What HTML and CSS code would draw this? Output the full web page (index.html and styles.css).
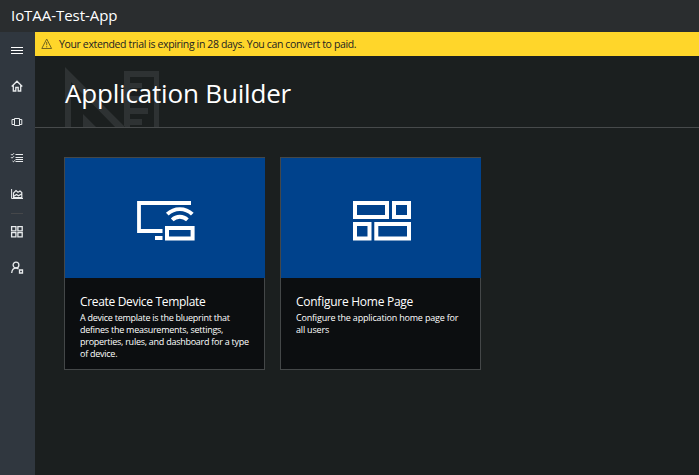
FILE: index.html
```html
<!DOCTYPE html>
<html lang="en">
<head>
<meta charset="utf-8">
<title>Application Builder</title>
<link rel="stylesheet" href="styles.css">
</head>
<body>
<header class="topbar"><span class="app-name">IoTAA-Test-App</span></header>
<div class="shell">
  <nav class="sidebar">
    <svg class="nav-icon" viewBox="0 0 14 14"><path d="M0 3.5h12M0 6.5h12M0 9.5h12" stroke="#fff"/></svg>
    <svg class="nav-icon" viewBox="0 0 14 14"><path d="M.7 6.5 6 1.2 11.3 6.5M2.3 5.5V11h2.5V7.5h2.4V11h2.5V5.5" stroke-width="1.3"/></svg>
    <svg class="nav-icon" viewBox="0 0 14 14"><path d="M3.5 2.5h5v7h-5zM3.5 3.5H1v5h2.5M8.5 3.5h2.3v5H8.5"/></svg>
    <svg class="nav-icon" viewBox="0 0 14 14"><path d="M4.5 2.5H12M4.5 5.5H12M4.5 7.5H12M4.5 9.5H12M0 2.2l1 1 2-2M0 5.2l1 1 2-2M1.5 9l1 .8 1.5-1.6"/></svg>
    <svg class="nav-icon" viewBox="0 0 14 14"><path d="M.6 1v9.5H12"/><path d="M2.5 9.5V5L5 2.5l2 1.8L9 3l1.8 1.5v5zM2.5 8.5l3-2 2 1.3L10.5 6" stroke-width="1.2"/></svg>
    <div class="divider"></div>
    <svg class="nav-icon grid-icon" viewBox="0 0 14 14"><path d="M.6 1.6h4.3v4.3H.6zM6.9 1.6h4.3v4.3H6.9zM.6 7.6h4.3v4.3H.6zM6.9 7.6h4.3v4.3H6.9z" stroke-width="1.3"/></svg>
    <svg class="nav-icon" viewBox="0 0 14 14"><circle cx="5" cy="4" r="2.9" stroke-width="1.3"/><path d="M.7 12C1 9 2.5 7.2 5 7.2c1 0 1.8.3 2.5.9M8.5 9h3v3h-3z" stroke-width="1.3"/></svg>
  </nav>
  <main class="main">
    <div class="banner">
      <svg class="warning" viewBox="0 0 12 12"><path d="M5.7 1 .8 10.5h9.8zM5.7 4v3.2M5.7 8.2v1.2"/></svg>
      <span class="banner-text">Your extended trial is expiring in 28 days. You can convert to paid.</span>
    </div>
    <section class="heading">
      <svg class="watermark" viewBox="0 0 96 60"><path fill-rule="evenodd" d="M0 0 60 60H50L6 15V60H0zM18 47 31 60H18zM59 4H94V60H89V10H65V16H77V21H65V29H77V34H65V41H83V47H65V52H77V58H65V60H59z"/></svg>
      <h1 class="title">Application Builder</h1>
    </section>
    <section class="cards">
      <article class="card">
        <div class="tile">
          <svg class="tile-icon" viewBox="0 0 60 42"><path d="M56 4H4V32H27.5M20 39H27.5" stroke-width="3.8"/><path d="M32 29H57.6V39.5H32z" stroke-width="4"/><path d="M32.3 15.2A18 18 0 0 1 57.3 15.2M37.2 20.8A11 11 0 0 1 52.4 20.8" stroke-width="3.9"/></svg>
        </div>
        <div class="card-body">
          <h2 class="card-title">Create Device Template</h2>
          <p class="card-text">A device template is the blueprint that<br>defines the measurements, settings,<br>properties, rules, and dashboard for a type<br>of device.</p>
        </div>
      </article>
      <article class="card">
        <div class="tile">
          <svg class="tile-icon" viewBox="0 0 60 42"><path d="M4 4H36V18H4zM43 4H58V18H43zM4 25H18.5V39.5H4zM25.3 25H58V39.5H25.3z" stroke-width="4"/></svg>
        </div>
        <div class="card-body">
          <h2 class="card-title home-title">Configure Home Page</h2>
          <p class="card-text home-text">Configure the application home page for<br>all users</p>
        </div>
      </article>
    </section>
  </main>
</div>
</body>
</html>
```
FILE: styles.css
```css
* { box-sizing: border-box; }
body {
  margin: 0;
  height: 475px;
  overflow: hidden;
  background: #1b1f1f;
  color: #fff;
  font-family: "Open Sans", "Noto Sans", sans-serif;
}
h1, h2, p { margin: 0; font-weight: 400; }
svg { display: block; fill: none; stroke: currentColor; overflow: visible; }
.topbar { height: 32px; background: #2a2d2f; padding-left: 11px; }
.app-name { display: block; font-size: 15px; line-height: 30px; letter-spacing: -.05px; white-space: nowrap; }
.shell { display: flex; height: 443px; }
.sidebar {
  flex: 0 0 35px;
  display: flex;
  flex-direction: column;
  gap: 22px;
  padding: 12px 0 0 11px;
  background: #30373f;
}
.nav-icon { width: 14px; height: 14px; flex: none; color: #e8ebed; }
.divider { height: 1px; width: 12px; margin-top: -11px; background: #45474a; }
.grid-icon { margin-top: -11px; }
.main { flex: 1; min-width: 0; }
.banner {
  height: 24px;
  display: flex;
  align-items: center;
  padding-left: 6px;
  gap: 6px;
  background: #ffd62a;
  color: #222;
}
.warning { width: 12px; height: 12px; color: #75661e; }
.banner-text { font-size: 10.5px; line-height: 24px; white-space: nowrap; letter-spacing: -.36px; }
.heading { position: relative; height: 72px; border-bottom: 1px solid #474a4b; padding: 19px 0 0 30px; }
.watermark { position: absolute; left: 30px; bottom: 0; width: 96px; height: 60px; fill: #2e3233; stroke: none; }
.title { position: relative; font-size: 26px; line-height: 36px; letter-spacing: -.18px; white-space: nowrap; }
.cards { display: flex; gap: 15px; padding: 29px 0 0 29px; }
.card { width: 201px; height: 213px; border: 1px solid #444748; background: #0c0e10; }
.tile { height: 120px; margin-right: -1px; padding: 41px 0 0 70px; background: #00428c; }
.tile-icon { width: 60px; height: 42px; }
.card-body { padding: 16px 0 0 15px; white-space: nowrap; }
.card-title { font-size: 12px; line-height: 16px; letter-spacing: -.33px; }
.home-title { letter-spacing: -.26px; }
.card-text { margin-top: 2px; font-size: 9px; line-height: 12px; letter-spacing: -.26px; }
.home-text { letter-spacing: -.19px; }
```
